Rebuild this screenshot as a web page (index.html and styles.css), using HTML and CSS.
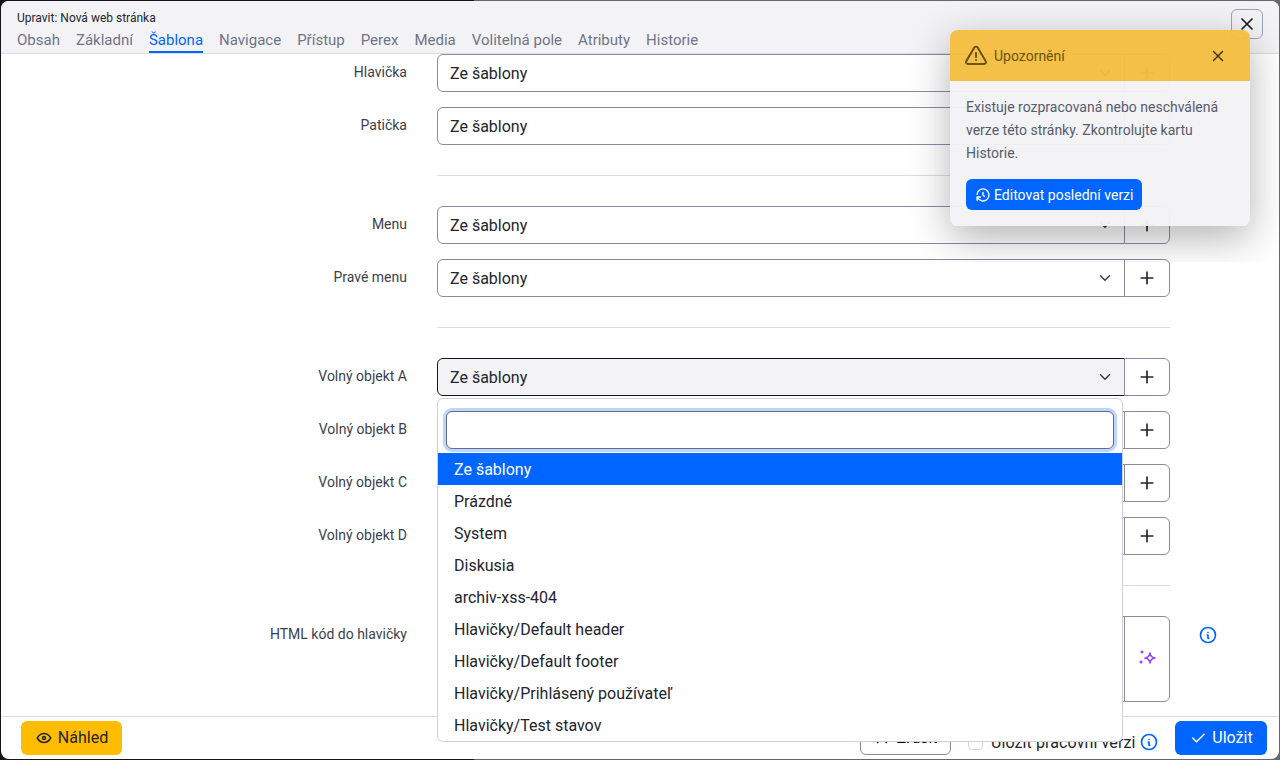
FILE: index.html
```html
<!doctype html>
<html lang="cs">
<head>
	<meta charset="UTF-8">
	<meta name="viewport" content="width=device-width, initial-scale=1.0">
	<title>Upravit: Nová web stránka</title>
	<link rel="stylesheet" href="styles.css">
</head>
<body>
	<div class="modal">
		<div class="modal-head">
			<div>
				<div class="modal-title">Upravit: Nová web stránka</div>
				<div class="tabs">
					<a>Obsah</a>
					<a>Základní</a>
					<a class="active">Šablona</a>
					<a>Navigace</a>
					<a>Přístup</a>
					<a>Perex</a>
					<a>Media</a>
					<a>Volitelná pole</a>
					<a>Atributy</a>
					<a>Historie</a>
				</div>
			</div>
			<button type="button" class="close-btn">
				<svg class="ico" width="20" height="20" viewBox="0 0 24 24"><path d="M18 6l-12 12M6 6l12 12"/></svg>
			</button>
		</div>

		<div class="modal-body">
			<div class="row">
				<label>Hlavička</label>
				<div class="field">
					<div class="pick">Ze šablony<svg class="ico chev" width="18" height="18" viewBox="0 0 24 24"><path d="M6 9l6 6l6 -6"/></svg></div>
					<button type="button" class="add"><svg class="ico" width="20" height="20" viewBox="0 0 24 24"><path d="M12 5v14M5 12h14"/></svg></button>
				</div>
			</div>
			<div class="row">
				<label>Patička</label>
				<div class="field">
					<div class="pick">Ze šablony<svg class="ico chev" width="18" height="18" viewBox="0 0 24 24"><path d="M6 9l6 6l6 -6"/></svg></div>
					<button type="button" class="add"><svg class="ico" width="20" height="20" viewBox="0 0 24 24"><path d="M12 5v14M5 12h14"/></svg></button>
				</div>
			</div>
			<hr/>
			<div class="row">
				<label>Menu</label>
				<div class="field">
					<div class="pick">Ze šablony<svg class="ico chev" width="18" height="18" viewBox="0 0 24 24"><path d="M6 9l6 6l6 -6"/></svg></div>
					<button type="button" class="add"><svg class="ico" width="20" height="20" viewBox="0 0 24 24"><path d="M12 5v14M5 12h14"/></svg></button>
				</div>
			</div>
			<div class="row">
				<label>Pravé menu</label>
				<div class="field">
					<div class="pick">Ze šablony<svg class="ico chev" width="18" height="18" viewBox="0 0 24 24"><path d="M6 9l6 6l6 -6"/></svg></div>
					<button type="button" class="add"><svg class="ico" width="20" height="20" viewBox="0 0 24 24"><path d="M12 5v14M5 12h14"/></svg></button>
				</div>
			</div>
			<hr/>
			<div class="row">
				<label>Volný objekt A</label>
				<div class="field open">
					<div class="pick">Ze šablony<svg class="ico chev" width="18" height="18" viewBox="0 0 24 24"><path d="M6 9l6 6l6 -6"/></svg></div>
					<button type="button" class="add"><svg class="ico" width="20" height="20" viewBox="0 0 24 24"><path d="M12 5v14M5 12h14"/></svg></button>
				</div>
			</div>
			<div class="row">
				<label>Volný objekt B</label>
				<div class="field">
					<div class="pick"></div>
					<button type="button" class="add"><svg class="ico" width="20" height="20" viewBox="0 0 24 24"><path d="M12 5v14M5 12h14"/></svg></button>
				</div>
			</div>
			<div class="row">
				<label>Volný objekt C</label>
				<div class="field">
					<div class="pick"></div>
					<button type="button" class="add"><svg class="ico" width="20" height="20" viewBox="0 0 24 24"><path d="M12 5v14M5 12h14"/></svg></button>
				</div>
			</div>
			<div class="row">
				<label>Volný objekt D</label>
				<div class="field">
					<div class="pick"></div>
					<button type="button" class="add"><svg class="ico" width="20" height="20" viewBox="0 0 24 24"><path d="M12 5v14M5 12h14"/></svg></button>
				</div>
			</div>
			<hr/>
			<div class="row">
				<label>HTML kód do hlavičky</label>
				<div class="field tall">
					<div class="pick"></div>
					<button type="button" class="add">
						<svg width="20" height="20" viewBox="0 0 24 24"><path class="spark-big" d="M15.6 4.8c.5 3.7 2.300 5.500 6 6c-3.700 .5 -5.500 2.300 -6 6c-.5 -3.700 -2.300 -5.500 -6 -6c3.700 -.5 5.500 -2.300 6 -6z"/><path class="spark" d="M6 .5c.4 1.800 1.300 2.700 3.100 3.100c-1.800 .4 -2.700 1.300 -3.100 3.100c-.4 -1.800 -1.300 -2.700 -3.100 -3.100c1.800 -.4 2.700 -1.300 3.100 -3.100zM4.800 12.500c.4 1.800 1.300 2.700 3.100 3.100c-1.800 .4 -2.700 1.300 -3.100 3.100c-.4 -1.800 -1.300 -2.700 -3.100 -3.100c1.800 -.4 2.700 -1.300 3.100 -3.100z"/></svg>
					</button>
				</div>
				<svg class="ico info row-info" width="20" height="20" viewBox="0 0 24 24"><path d="M3 12a9 9 0 1 0 18 0a9 9 0 0 0 -18 0M12 9h.01M11 12h1v4h1"/></svg>
			</div>
		</div>

		<div class="modal-foot">
			<button type="button" class="btn btn-yellow">
				<svg class="ico" width="18" height="18" viewBox="0 0 24 24"><path d="M10 12a2 2 0 1 0 4 0a2 2 0 0 0 -4 0M21 12c-2.4 4 -5.4 6 -9 6c-3.6 0 -6.6 -2 -9 -6c2.4 -4 5.4 -6 9 -6c3.6 0 6.6 2 9 6"/></svg>
				<span>Náhled</span>
			</button>
			<div class="foot-right">
				<button type="button" class="btn btn-outline">
					<svg class="ico" width="18" height="18" viewBox="0 0 24 24"><path d="M18 6l-12 12M6 6l12 12"/></svg>
					<span>Zrušit</span>
				</button>
				<span class="check"></span>
				<span class="check-label">Uložit pracovní verzi</span>
				<svg class="ico info" width="20" height="20" viewBox="0 0 24 24"><path d="M3 12a9 9 0 1 0 18 0a9 9 0 0 0 -18 0M12 9h.01M11 12h1v4h1"/></svg>
				<button type="button" class="btn btn-blue">
					<svg class="ico" width="18" height="18" viewBox="0 0 24 24"><path d="M5 12l5 5l10 -10"/></svg>
					<span>Uložit</span>
				</button>
			</div>
		</div>

		<div class="dropdown">
			<div class="search"><input type="text"></div>
			<ul>
				<li class="selected">Ze šablony</li>
				<li>Prázdné</li>
				<li>System</li>
				<li>Diskusia</li>
				<li>archiv-xss-404</li>
				<li>Hlavičky/Default header</li>
				<li>Hlavičky/Default footer</li>
				<li>Hlavičky/Prihlásený používateľ</li>
				<li>Hlavičky/Test stavov</li>
			</ul>
		</div>

		<div class="toast-clip">
			<div class="toast">
				<div class="toast-head">
					<svg class="ico" width="24" height="24" viewBox="0 0 24 24"><path d="M12 9v4M10.363 3.591l-8.106 13.534a1.914 1.914 0 0 0 1.636 2.871h16.214a1.914 1.914 0 0 0 1.636 -2.87l-8.106 -13.536a1.914 1.914 0 0 0 -3.274 0zM12 16h.01"/></svg>
					<span class="toast-title">Upozornění</span>
					<svg class="ico" width="18" height="18" viewBox="0 0 24 24"><path d="M18 6l-12 12M6 6l12 12"/></svg>
				</div>
				<div class="toast-body">
					<p>Existuje rozpracovaná nebo neschválená verze této stránky. Zkontrolujte kartu Historie.</p>
					<button type="button" class="btn-small">
						<svg class="ico" width="16" height="16" viewBox="0 0 24 24"><path d="M12 8v4l2 2M3.05 11a9 9 0 1 1 .5 4m-.5 5v-5h5"/></svg>
						Editovat poslední verzi
					</button>
				</div>
			</div>
		</div>
	</div>
</body>
</html>
```

FILE: styles.css
```css
* {
	padding: 0;
	margin: 0;
	box-sizing: border-box;
}
body {
	height: 100vh;
	padding: 1px;
	overflow: hidden;
	background: linear-gradient(to right, #15151c 37%, #66666c 37%);
	font-family: Roboto, "Liberation Sans", sans-serif;
	color: #22252f;
}
button {
	font-family: inherit;
	background: none;
	cursor: pointer;
}
.ico {
	fill: none;
	stroke: currentColor;
	stroke-width: 2;
	stroke-linecap: round;
	stroke-linejoin: round;
	flex: none;
}

/* window */
.modal {
	position: relative;
	display: flex;
	flex-direction: column;
	height: 100%;
	background: #fff;
	border-radius: 8px;
	overflow: hidden;
}
.modal-head {
	display: flex;
	justify-content: space-between;
	align-items: flex-start;
	height: 53px;
	padding: 10px 16px 0;
	background: #f3f3f5;
	border-bottom: 1px solid #dcdce2;
}
.modal-title {
	font-size: 12px;
	line-height: 14px;
	color: #22252f;
}
.tabs {
	display: flex;
	gap: 16px;
	margin-top: 5px;
	font-size: 15px;
	line-height: 20px;
	color: #6f7488;
}
.tabs a {
	height: 23px;
}
.tabs a.active {
	color: #0066ff;
	border-bottom: 2px solid #0066ff;
}
.close-btn {
	display: flex;
	align-items: center;
	justify-content: center;
	width: 32px;
	height: 30px;
	margin-top: -2px;
	color: #14161c;
	border: 1px solid #9ca2b8;
	border-radius: 6px;
}

/* form */
.modal-body {
	flex: 1;
	overflow: hidden;
}
.row {
	display: flex;
	align-items: flex-start;
	margin-bottom: 15px;
}
.row label {
	width: 406px;
	margin-right: 30px;
	padding-top: 8px;
	text-align: right;
	font-size: 14px;
	line-height: 20px;
	color: #3b3f4c;
}
.field {
	display: flex;
	width: 733px;
	height: 38px;
}
.field.tall {
	height: 86px;
}
.pick {
	flex: 1;
	display: flex;
	align-items: center;
	justify-content: space-between;
	padding: 0 10px 0 12px;
	font-size: 16px;
	border: 1px solid #868ca3;
	border-radius: 6px 0 0 6px;
}
.add {
	display: flex;
	align-items: center;
	justify-content: center;
	width: 46px;
	margin-left: -1px;
	color: #22252f;
	border: 1px solid #868ca3;
	border-radius: 0 6px 6px 0;
}
.open .pick {
	background: #f3f3f5;
	border-color: #14161c;
}
.chev {
	color: #3b3f4c;
}
hr {
	width: 733px;
	margin: 30px 0 30px 436px;
	border: none;
	border-top: 1px solid #dcdce2;
}
.spark {
	fill: #9146ff;
}
.spark-big {
	fill: none;
	stroke: #9146ff;
	stroke-width: 2;
	stroke-linejoin: round;
}
.info {
	color: #0066ff;
}
.row-info {
	margin: 9px 0 0 28px;
}

/* footer */
.modal-foot {
	display: flex;
	justify-content: space-between;
	height: 43px;
	padding: 4px 12px 0 20px;
	border-top: 1px solid #dcdce2;
}
.foot-right {
	display: flex;
	align-items: center;
	height: 34px;
}
.btn {
	display: flex;
	align-items: center;
	justify-content: center;
	gap: 5px;
	height: 34px;
	font-size: 16px;
	border: 1px solid transparent;
	border-radius: 6px;
}
.btn span {
	margin-top: -2px;
}
.btn-yellow {
	width: 101px;
	background: #ffbc00;
	color: #22252f;
}
.btn-outline {
	width: 91px;
	border-color: #868ca3;
}
.btn-blue {
	width: 92px;
	margin-left: 16px;
	background: #0066ff;
	color: #fff;
}
.check {
	width: 15px;
	height: 15px;
	margin: 8px 0 0 17px;
	border: 1px solid #d4d6de;
	border-radius: 4px;
}
.check-label {
	width: 144px;
	margin: 8px 4px 0 8px;
	font-size: 16px;
	letter-spacing: 0.1px;
	white-space: nowrap;
}
.foot-right .info {
	margin-top: 8px;
}

/* open select list */
.dropdown {
	position: absolute;
	top: 397px;
	left: 436px;
	width: 686px;
	background: #fff;
	border: 1px solid #cfd1d8;
	border-radius: 6px;
}
.search {
	padding: 12px 8px 4px;
}
.search input {
	display: block;
	width: 100%;
	height: 38px;
	border: 1px solid #666b80;
	border-radius: 6px;
	box-shadow: 0 0 0 3px #bcd6fd;
	outline: none;
}
.dropdown ul {
	list-style: none;
}
.dropdown li {
	height: 32px;
	padding: 0 16px;
	font-size: 16px;
	line-height: 33px;
}
.dropdown li.selected {
	background: #0066ff;
	color: #fff;
}

/* notice */
.toast-clip {
	position: absolute;
	top: 0;
	left: 880px;
	right: 0;
	height: 261px;
	overflow: hidden;
}
.toast {
	width: 300px;
	margin: 29px 0 0 69px;
	border-radius: 8px;
	overflow: hidden;
	box-shadow: 0 12px 40px rgba(0, 0, 0, 0.3);
}
.toast-head {
	display: flex;
	align-items: center;
	height: 51px;
	padding: 0 23px 0 14px;
	background: rgba(245, 190, 65, 0.97);
	color: #6b5310;
}
.toast-title {
	flex: 1;
	margin-left: 6px;
	font-size: 14px;
}
.toast-head .ico:last-child {
	color: #3d3410;
}
.toast-body {
	padding: 15px 16px 16px;
	background: rgba(243, 243, 245, 0.97);
}
.toast-body p {
	font-size: 14px;
	line-height: 23px;
	color: #565b6e;
}
.btn-small {
	display: flex;
	align-items: center;
	gap: 3px;
	height: 31px;
	margin-top: 14px;
	padding: 0 9px;
	font-size: 14px;
	color: #fff;
	background: #0066ff;
	border: none;
	border-radius: 6px;
}
```
